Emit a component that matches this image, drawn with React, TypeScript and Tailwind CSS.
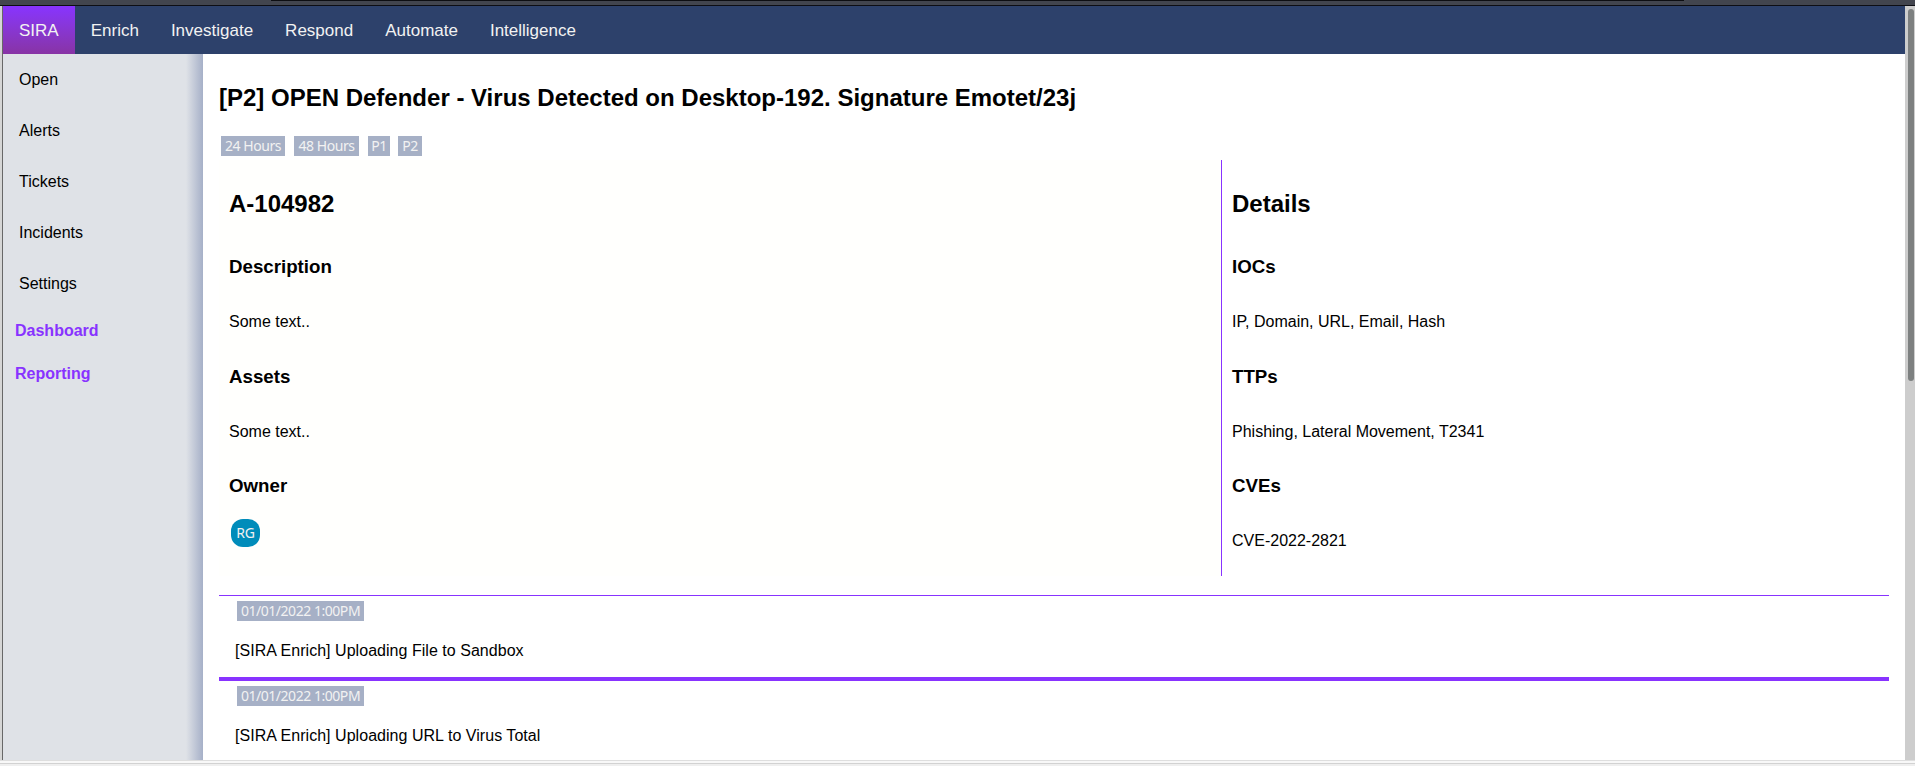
const nav = ["Enrich", "Investigate", "Respond", "Automate", "Intelligence"];
const side = ["Open", "Alerts", "Tickets", "Incidents", "Settings"];

function Tag({ children, className }: { children: string; className: string }) {
  return (
    <span className={`h-5 shrink-0 bg-[#a6b0c6] text-center font-['Noto_Sans',sans-serif] text-[14px] leading-5 tracking-[-0.46px] whitespace-nowrap text-[#f2f2f2] ${className}`}>
      {children}
    </span>
  );
}

function Section({ title, children }: { title: string; children: React.ReactNode }) {
  return (
    <section>
      <h3 className="mb-[36px] text-[18.72px] leading-[21px] font-bold">{title}</h3>
      <div className="mb-[34.5px] h-[18px] leading-[18px]">{children}</div>
    </section>
  );
}

export default function App() {
  return (
    <div className="flex h-[766px] w-[1915px] flex-col overflow-hidden bg-white font-['Liberation_Sans',Arial,sans-serif] text-base text-black">
      <div className="flex h-[6px] shrink-0 flex-col border-b border-[#0d0e14] bg-[#42454e] pl-[271px]">
        <div className="h-px w-[1413px] bg-[#0d0e12]" />
      </div>
      <div className="flex h-[754px] shrink-0">
        <div className="w-[3px] border-r border-[#686868] bg-[#d6d6d6]" />
        <div className="flex w-[1902px] flex-col">
          <nav className="flex h-12 shrink-0 bg-[#2d416b] text-[17px] leading-5 text-[#f2f2f2]">
            <a className="bg-linear-to-b from-[#8833ff] to-[#8833a5] px-4 pt-[15px] pb-[13px]">SIRA</a>
            {nav.map((n) => (
              <a key={n} className="px-4 pt-[15px] pb-[13px]">{n}</a>
            ))}
          </nav>
          <div className="flex min-h-0 flex-1">
            <aside className="flex w-[200px] shrink-0 flex-col bg-[linear-gradient(to_right,#dfe2e7_183px,#a6b0c8_200px)]">
              {side.map((s) => (
                <a key={s} className="block h-[51px] px-4 py-4 leading-[19px]">{s}</a>
              ))}
              <a className="mt-[13px] ml-3 leading-[18px] font-bold text-[#8833ff]">Dashboard</a>
              <a className="mt-[25px] ml-3 leading-[18px] font-bold text-[#8833ff]">Reporting</a>
            </aside>
            <main className="flex w-[1702px] flex-col px-4">
              <h2 className="mt-[30px] text-2xl leading-[27px] font-bold">[P2] OPEN Defender - Virus Detected on Desktop-192. Signature Emotet/23j</h2>
              <div className="mt-[25px] flex pl-[2px]">
                <Tag className="mr-[9px] w-16">24 Hours</Tag>
                <Tag className="mr-[9px] w-[65px]">48 Hours</Tag>
                <Tag className="mr-2 w-[22px]">P1</Tag>
                <Tag className="w-6">P2</Tag>
              </div>
              <div className="mt-[4px] flex h-[416px] shrink-0">
                <div className="w-[1002px] bg-[#fffffd] pt-[30px] pl-[10px]">
                  <h2 className="mb-[39px] text-2xl leading-[27px] font-bold">A-104982</h2>
                  <Section title="Description">Some text..</Section>
                  <Section title="Assets">Some text..</Section>
                  <Section title="Owner">
                    <div className="ml-[2px] h-7 w-[29px] -translate-y-[13px] rounded-[12px] bg-[#008cba] text-center font-['Noto_Sans',sans-serif] text-[14px] leading-7 tracking-[-0.3px] text-[#f2f2f2]">RG</div>
                  </Section>
                </div>
                <div className="w-[668px] border-l border-[#8833ff] pt-[30px] pl-[10px]">
                  <h2 className="mb-[39px] text-2xl leading-[27px] font-bold">Details</h2>
                  <Section title="IOCs">IP, Domain, URL, Email, Hash</Section>
                  <Section title="TTPs">Phishing, Lateral Movement, T2341</Section>
                  <Section title="CVEs">CVE-2022-2821</Section>
                </div>
              </div>
              <div className="mt-[19px] h-[86px] shrink-0 border-t border-b-4 border-[#8833ff] px-4 pt-[5px]">
                <div className="flex pl-[2px]"><Tag className="w-[127px]">01/01/2022 1:00PM</Tag></div>
                <p className="mt-[21px] leading-[18px] tracking-[0.035px]">[SIRA Enrich] Uploading File to Sandbox</p>
              </div>
              <div className="px-4 pt-[5px]">
                <div className="flex pl-[2px]"><Tag className="w-[127px]">01/01/2022 1:00PM</Tag></div>
                <p className="mt-[21px] leading-[18px] tracking-[0.035px]">[SIRA Enrich] Uploading URL to Virus Total</p>
              </div>
            </main>
          </div>
        </div>
        <div className="flex w-[10px] justify-end bg-[#cdcdcd] px-[1px] pt-[3px]">
          <div className="h-[372px] w-[6px] rounded-full bg-[#7d8080]" />
        </div>
      </div>
      <div className="h-px shrink-0 bg-[#dedede]" />
      <div className="h-[2px] shrink-0 bg-[#f8f8f8]" />
      <div className="h-px shrink-0 bg-[#d2d2d2]" />
      <div className="h-[2px] shrink-0 bg-[#efefef]" />
    </div>
  );
}
